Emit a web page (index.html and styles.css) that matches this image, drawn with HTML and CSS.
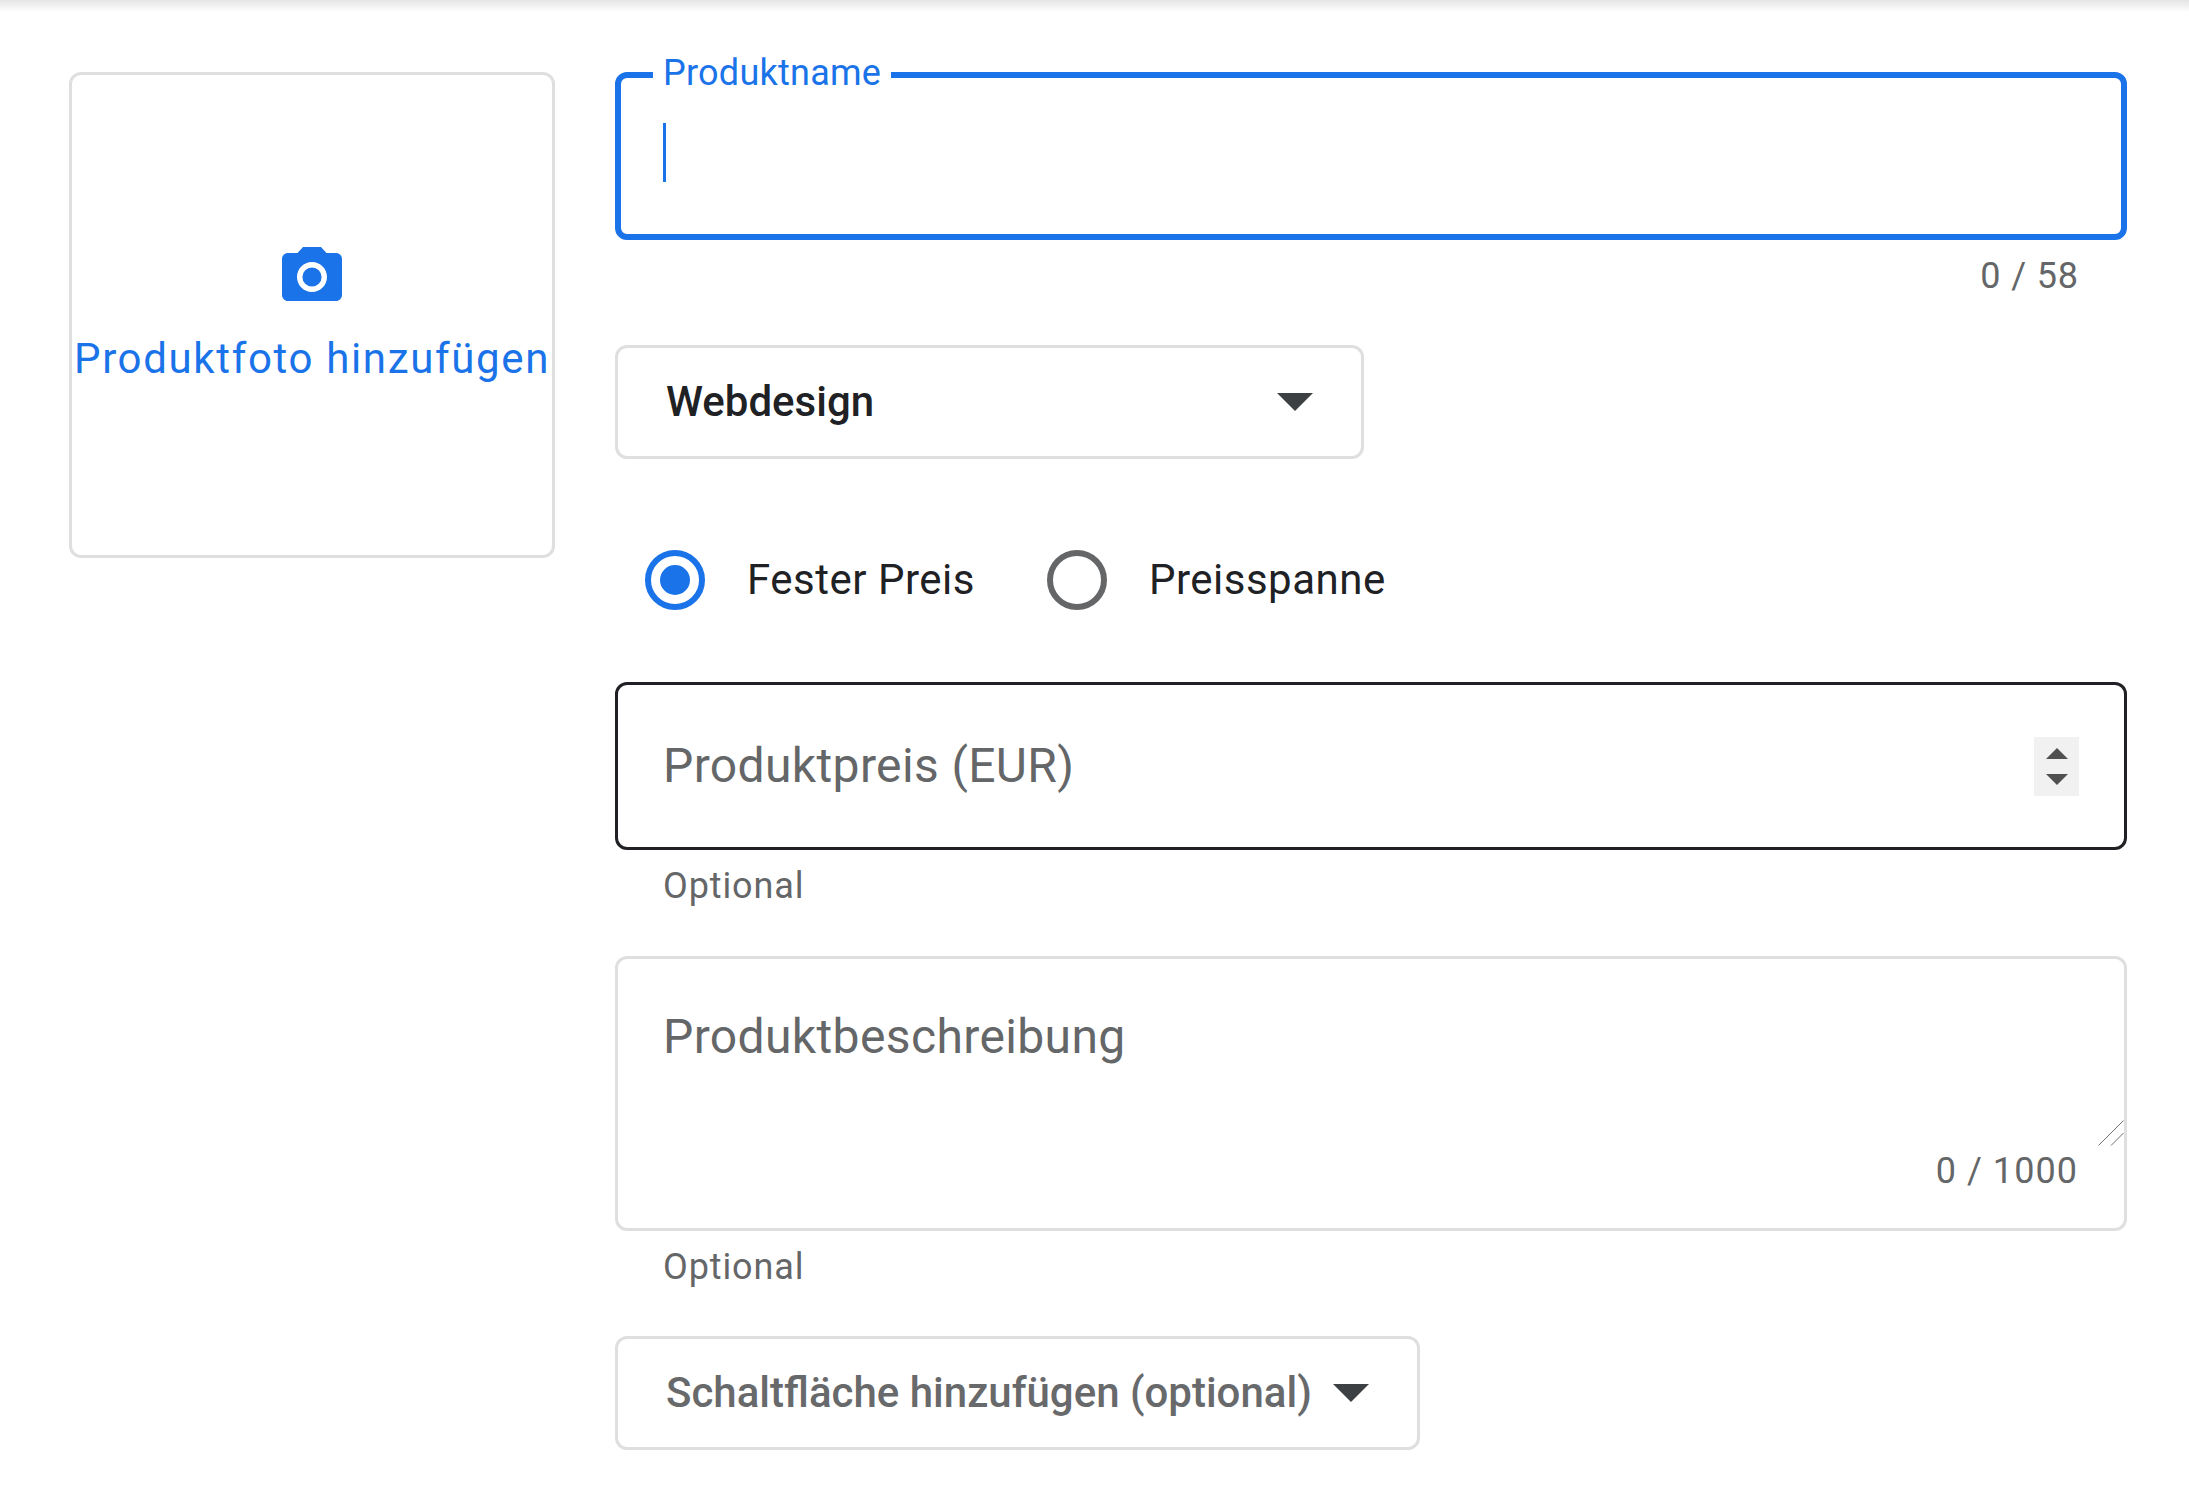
FILE: index.html
```html
<!DOCTYPE html>
<html lang="de">
<head>
<meta charset="utf-8">
<title>Produkt hinzufügen</title>
<link rel="stylesheet" href="styles.css">
</head>
<body>
<div class="topbar"></div>
<main class="layout">
  <div class="photo">
    <svg class="camera" viewBox="0 0 24 24" aria-hidden="true"><path d="M12 8.8a3.2 3.2 0 1 0 0 6.4 3.2 3.2 0 0 0 0-6.4z"/><path d="M9 2L7.17 4H4c-1.1 0-2 .9-2 2v12c0 1.1.9 2 2 2h16c1.1 0 2-.9 2-2V6c0-1.1-.9-2-2-2h-3.17L15 2H9zm3 15c-2.76 0-5-2.24-5-5s2.24-5 5-5 5 2.24 5 5-2.24 5-5 5z"/></svg>
    <span class="photo-text">Produktfoto hinzufügen</span>
  </div>
  <form class="form">
    <div class="field field-focus">
      <span class="float-label">Produktname</span>
      <span class="caret"></span>
    </div>
    <div class="helper helper-count">0 / 58</div>

    <div class="select select-cat">
      <span class="select-text">Webdesign</span>
      <span class="arrow"></span>
    </div>

    <div class="radios">
      <div class="radio-item">
        <span class="radio radio-on"><span class="radio-dot"></span></span>
        <span class="radio-label">Fester Preis</span>
      </div>
      <div class="radio-item">
        <span class="radio"></span>
        <span class="radio-label">Preisspanne</span>
      </div>
    </div>

    <div class="field field-dark">
      <span class="placeholder">Produktpreis (EUR)</span>
      <span class="spinner"><span class="tri-up"></span><span class="tri-down"></span></span>
    </div>
    <div class="helper helper-opt">Optional</div>

    <div class="field field-area">
      <span class="placeholder">Produktbeschreibung</span>
      <span class="area-count">0 / 1000</span>
      <svg class="resize" viewBox="0 0 26 26" aria-hidden="true"><path d="M0.5 25.5L25.5 0.5M13 25.5L25.5 13"/></svg>
    </div>
    <div class="helper helper-opt">Optional</div>

    <div class="select select-btn">
      <span class="select-text select-muted">Schaltfläche hinzufügen (optional)</span>
      <span class="arrow"></span>
    </div>
  </form>
</main>
</body>
</html>
```

FILE: styles.css
```css
* { box-sizing: border-box; }
html, body { margin: 0; padding: 0; background: #fff; }
body {
  width: 2189px;
  height: 1495px;
  overflow: hidden;
  font-family: Roboto, "Liberation Sans", sans-serif;
  position: relative;
}
.topbar {
  position: absolute;
  top: 0; left: 0; right: 0;
  height: 12px;
  background: linear-gradient(#e4e4e4, #ffffff);
}
.layout {
  display: flex;
  align-items: flex-start;
  gap: 60px;
  padding: 72px 62px 0 69px;
}
.photo {
  flex: 0 0 486px;
  height: 486px;
  border: 3px solid #dfdfdf;
  border-radius: 12px;
  display: flex;
  flex-direction: column;
  align-items: center;
  justify-content: center;
  gap: 16px;
  color: #1a73e8;
}
.camera { width: 72px; height: 72px; fill: #1a73e8; display: block; }
.photo-text {
  font-size: 42px;
  line-height: 60px;
  letter-spacing: 1.65px;
  white-space: nowrap;
}
.form { flex: 0 0 1512px; display: flex; flex-direction: column; }

.field {
  position: relative;
  border: 3px solid #dfdfdf;
  border-radius: 12px;
  height: 168px;
  padding: 0 45px;
  display: flex;
  align-items: center;
}
.field-focus { border: 6px solid #1a73e8; padding: 0 42px; }
.field-dark { border-color: #202124; }
.field-area { height: 275px; align-items: flex-start; padding-top: 48px; }

.float-label {
  position: absolute;
  left: 32px;
  top: -26px;
  padding: 0 10px;
  background: #fff;
  color: #1a73e8;
  font-size: 36px;
  line-height: 42px;
  letter-spacing: 0.25px;
}
.caret { width: 3px; height: 59px; background: #1a73e8; margin-top: -7px; }

.placeholder {
  color: #646668;
  font-size: 48px;
  line-height: 60px;
  letter-spacing: 0.37px;
}
.helper {
  color: #646668;
  font-size: 36px;
  line-height: 48px;
  letter-spacing: 0.9px;
  padding: 0 48px;
}
.helper-count { text-align: right; padding-top: 12px; height: 105px; }
.helper-opt { margin-top: 12px; height: 94px; }
.field-area + .helper-opt { margin-top: 12px; height: 93px; }

.select {
  height: 114px;
  border: 3px solid #dfdfdf;
  border-radius: 12px;
  padding: 0 48px;
  display: flex;
  align-items: center;
  justify-content: space-between;
}
.select-cat { width: 749px; }
.select-btn { width: 805px; }
.select-text {
  color: #202124;
  font-size: 42px;
  font-weight: 500;
  line-height: 60px;
  letter-spacing: 0;
}
.select-muted { color: #68696b; }
.arrow {
  width: 0; height: 0;
  border-left: 18px solid transparent;
  border-right: 18px solid transparent;
  border-top: 18px solid #3c4043;
}

.radios {
  display: flex;
  align-items: center;
  gap: 72px;
  height: 223px;
  padding: 18px 0 0 30px;
}
.radio-item { display: flex; align-items: center; gap: 42px; }
.radio {
  width: 60px; height: 60px;
  border: 6px solid #646668;
  border-radius: 50%;
  display: flex;
  align-items: center;
  justify-content: center;
}
.radio-on { border-color: #1a73e8; }
.radio-dot { width: 30px; height: 30px; border-radius: 50%; background: #1a73e8; }
.radio-label {
  color: #202124;
  font-size: 42px;
  line-height: 60px;
  letter-spacing: 0.5px;
}

.spinner {
  position: absolute;
  right: 45px;
  top: 52px;
  width: 45px;
  height: 59px;
  background: #f1f1f1;
  display: flex;
  flex-direction: column;
  align-items: center;
  justify-content: center;
  gap: 15px;
}
.tri-up, .tri-down {
  width: 0; height: 0;
  border-left: 11px solid transparent;
  border-right: 11px solid transparent;
}
.tri-up { border-bottom: 11px solid #505050; }
.tri-down { border-top: 11px solid #505050; }

.area-count {
  position: absolute;
  right: 46px;
  bottom: 33px;
  color: #646668;
  font-size: 36px;
  line-height: 48px;
  letter-spacing: 1.05px;
}
.resize {
  position: absolute;
  right: 0;
  top: 161px;
  width: 26px;
  height: 26px;
  fill: none;
  stroke: #6f6f6f;
  stroke-width: 1;
}
```
